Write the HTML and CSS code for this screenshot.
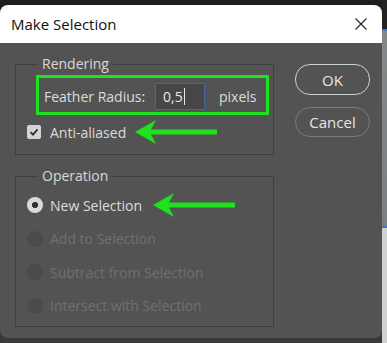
FILE: index.html
```html
<!DOCTYPE html>
<html lang="en">
<head>
  <meta charset="UTF-8">
  <title>Make Selection</title>
  <link rel="stylesheet" href="styles.css">
</head>
<body>
  <div class="screen">
    <div class="dialog">
      <div class="titlebar">
        <span class="title">Make Selection</span>
        <svg class="close" width="12" height="12" viewBox="0 0 12 12">
          <path d="M0.5 0.5 L11.5 11.5 M11.5 0.5 L0.5 11.5" stroke="#222" stroke-width="1.1" fill="none"/>
        </svg>
      </div>

      <div class="content">
        <div class="options">
          <fieldset class="group rendering">
            <legend>Rendering</legend>
            <div class="highlight">
              <span class="feather-label">Feather Radius:</span>
              <span class="field">0,5<i class="caret"></i></span>
              <span class="unit">pixels</span>
            </div>
            <div class="row">
              <span class="check">
                <svg width="10" height="10" viewBox="0 0 10 10">
                  <path d="M1.5 5.2 L4 7.6 L8.6 2.4" stroke="#2e2e2e" stroke-width="1.8" fill="none"/>
                </svg>
              </span>
              <span class="label">Anti-aliased</span>
              <svg class="arrow" width="82" height="26" viewBox="0 0 82 26">
                <polygon points="0,13 21,1 16,10.5 82,10.5 82,15.5 16,15.5 21,25" fill="#1fe21f"/>
              </svg>
            </div>
          </fieldset>

          <fieldset class="group operation">
            <legend>Operation</legend>
            <div class="row">
              <span class="radio on"></span>
              <span class="label">New Selection</span>
              <svg class="arrow" width="82" height="26" viewBox="0 0 82 26">
                <polygon points="0,13 21,1 16,10.5 82,10.5 82,15.5 16,15.5 21,25" fill="#1fe21f"/>
              </svg>
            </div>
            <div class="row disabled">
              <span class="radio"></span>
              <span class="label">Add to Selection</span>
            </div>
            <div class="row disabled">
              <span class="radio"></span>
              <span class="label">Subtract from Selection</span>
            </div>
            <div class="row disabled">
              <span class="radio"></span>
              <span class="label">Intersect with Selection</span>
            </div>
          </fieldset>
        </div>

        <div class="buttons">
          <button class="btn primary">OK</button>
          <button class="btn">Cancel</button>
        </div>
      </div>
    </div>
    <div class="backdrop"></div>
  </div>
</body>
</html>
```

FILE: styles.css
```css
body {
  margin: 0;
  background: #3a3a3a;
  font-family: "Open Sans", "Noto Sans", sans-serif;
}
.screen {
  display: flex;
  align-items: flex-start;
  width: 387px;
  height: 343px;
  background: linear-gradient(#1f1f1f 0, #1f1f1f 40px, #3a3a3a 40px);
}
.dialog {
  width: 382px;
  height: 333px;
  margin-top: 5px;
  border-radius: 8px;
  overflow: hidden;
  background: #535353;
}
.titlebar {
  height: 38px;
  background: #fff;
  display: flex;
  align-items: center;
  justify-content: space-between;
  padding: 0 15px 0 11px;
}
.title {
  font-size: 15px;
  color: #111;
}
.content {
  display: flex;
  gap: 21px;
  padding: 11px 13px 0 15px;
}
.group {
  width: 259px;
  box-sizing: border-box;
  margin: 0;
  border: 1px solid #3e3e3e;
  padding: 0 3px 12px 11px;
  color: #dcdcdc;
  font-size: 14px;
}
.group legend {
  margin-left: 11px;
  padding: 0 4px;
  line-height: 20px;
  color: #d8d8d8;
}
.highlight {
  width: 233px;
  height: 40px;
  box-sizing: border-box;
  margin: 1px 0 0 9px;
  border: 3px solid #1fe21f;
  display: flex;
  align-items: center;
  padding: 2px 0 0 5px;
}
.feather-label {
  width: 111px;
}
.field {
  width: 50px;
  height: 27px;
  box-sizing: border-box;
  border: 1px solid #3a6aa6;
  background: #464646;
  color: #e8e8e8;
  padding-left: 7px;
  line-height: 25px;
  display: flex;
  align-items: center;
}
.caret {
  width: 1px;
  height: 17px;
  background: #e8e8e8;
  margin-left: 1px;
}
.unit {
  margin-left: 14px;
}
.row {
  display: flex;
  align-items: center;
  height: 20px;
}
.rendering .row {
  margin-top: 7px;
}
.operation {
  margin-top: 11px;
  padding-bottom: 10px;
  display: flex;
  flex-direction: column;
  gap: 13.5px;
}
.operation .row:first-of-type {
  margin-top: 9px;
}
.check {
  width: 14px;
  height: 14px;
  border-radius: 2px;
  background: #d4d4d4;
  display: flex;
  align-items: center;
  justify-content: center;
}
.label {
  margin-left: 9px;
}
.radio {
  width: 16px;
  height: 16px;
  box-sizing: border-box;
  border-radius: 50%;
  background: #4b4b4b;
  margin-right: -2px;
}
.radio.on {
  background: radial-gradient(circle, #333 0, #333 2.8px, #dadada 3.3px);
}
.row.disabled .label {
  color: #707070;
}
.arrow {
  margin-left: 9px;
}
.operation .arrow {
  margin-left: 11px;
}
.buttons {
  display: flex;
  flex-direction: column;
  gap: 12px;
  padding-top: 10px;
}
.btn {
  width: 75px;
  height: 30px;
  border-radius: 15px;
  border: 1px solid #7c7c7c;
  background: transparent;
  color: #e6e6e6;
  font-family: "Open Sans", "Noto Sans", sans-serif;
  font-size: 15px;
  padding: 0;
}
.btn.primary {
  height: 31px;
  border: 1.5px solid #d0d0d0;
}
.backdrop {
  width: 5px;
  height: 343px;
  background: linear-gradient(#232323 0, #232323 29px, #3a78c8 29px, #3a78c8 31px, #838889 31px, #7b8082 226px, #3a78c8 226px, #3a78c8 228px, #cfd2cf 228px);
}
```
